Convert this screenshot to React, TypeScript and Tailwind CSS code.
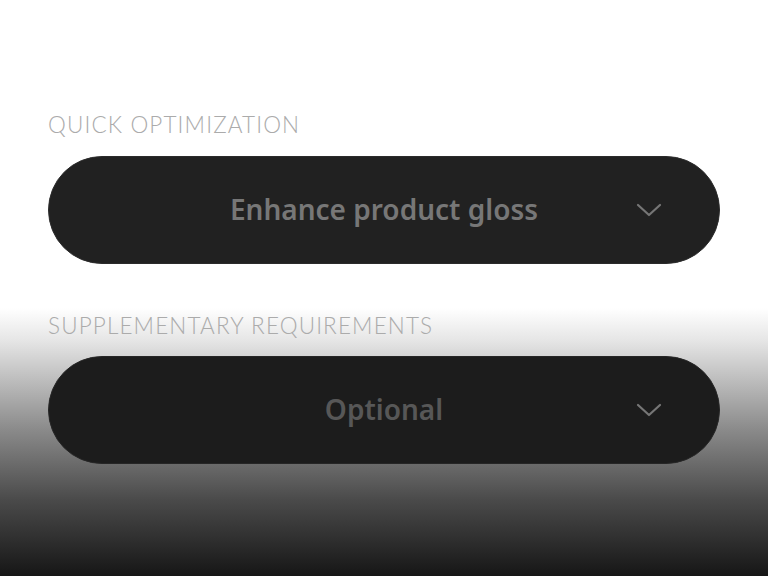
import React from "react";

function Chevron() {
  return (
    <svg width="26" height="14" viewBox="0 0 26 14" fill="none" className="shrink-0">
      <path d="M2 2 L13 12 L24 2" stroke="#767676" strokeWidth="2.2" strokeLinecap="round" strokeLinejoin="round" />
    </svg>
  );
}

function Field({
  label,
  value,
  pillClass,
  valueClass,
}: {
  label: string;
  value: string;
  pillClass: string;
  valueClass: string;
}) {
  return (
    <div className="flex flex-col">
      <div
        className="text-[22.5px] leading-none tracking-[0.05em] text-[#ababab] font-light"
        style={{ fontFamily: '"Lato", "Noto Sans", sans-serif' }}
      >
        {label}
      </div>
      <div
        className={`mt-[19px] h-[108px] rounded-full border grid grid-cols-[80px_1fr_80px] items-center px-[20px] ${pillClass}`}
      >
        <div />
        <div
          className={`text-center text-[28px] leading-none pb-[2px] font-semibold ${valueClass}`}
          style={{ fontFamily: '"Noto Sans", "Open Sans", sans-serif' }}
        >
          {value}
        </div>
        <div className="flex justify-end pr-[37px]">
          <Chevron />
        </div>
      </div>
    </div>
  );
}

export default function App() {
  return (
    <div className="w-[768px] h-[576px] overflow-hidden bg-[linear-gradient(to_bottom,#ffffff_0px,#ffffff_308px,#e6e6e6_340px,#8a8a8a_430px,#4a4a4a_500px,#161616_576px)]">
      <div className="flex flex-col gap-[51px] px-[48px] pt-[114px]">
        <Field
          label="QUICK OPTIMIZATION"
          value="Enhance product gloss"
          pillClass="bg-[#212121] border-[#2b2b2b]"
          valueClass="text-[#777777]"
        />
        <Field
          label="SUPPLEMENTARY REQUIREMENTS"
          value="Optional"
          pillClass="bg-[#1c1c1c] border-[#262626]"
          valueClass="text-[#575757]"
        />
      </div>
    </div>
  );
}
